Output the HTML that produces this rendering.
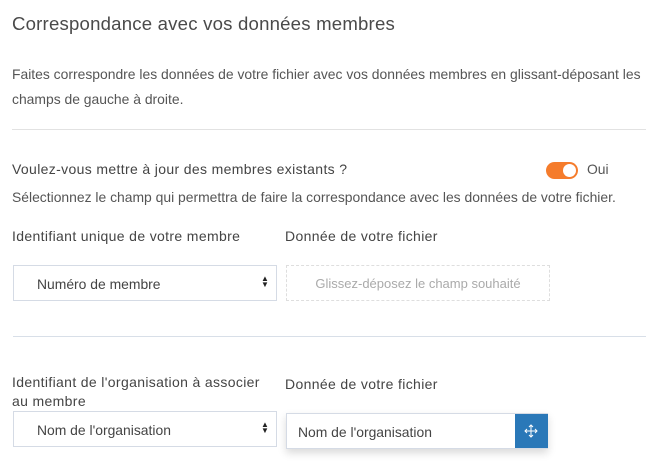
<!DOCTYPE html><html><head><style>
body{margin:0;width:661px;height:474px;background:#fff;font-family:"Liberation Sans",sans-serif;color:#555;position:relative;overflow:hidden}
.a{position:absolute;white-space:nowrap}
.t{font-size:13.9px;color:#555}
.l{font-size:14px;letter-spacing:.35px;color:#444}
</style></head><body>
<div class="a" style="left:12px;top:13px;font-size:18.6px;letter-spacing:.2px;color:#4a4a4a">Correspondance avec vos données membres</div>
<div class="a t" style="left:12px;top:66px">Faites correspondre les données de votre fichier avec vos données membres en glissant-déposant les</div>
<div class="a t" style="left:12px;top:91px">champs de gauche à droite.</div>
<div class="a" style="left:12px;top:129px;width:634px;height:1px;background:#e2e2e2"></div>
<div class="a l" style="left:12px;top:161px">Voulez-vous mettre à jour des membres existants ?</div>
<div class="a" style="left:546px;top:162px;width:32px;height:17px;border-radius:9px;background:#f57c2c"></div>
<div class="a" style="left:563px;top:164px;width:13px;height:13px;border-radius:7px;background:#fff"></div>
<div class="a t" style="left:587px;top:161px">Oui</div>
<div class="a t" style="left:12px;top:189px">Sélectionnez le champ qui permettra de faire la correspondance avec les données de votre fichier.</div>
<div class="a l" style="left:12px;top:228px">Identifiant unique de votre membre</div>
<div class="a l" style="left:285px;top:228px">Donnée de votre fichier</div>
<div class="a" style="left:13px;top:265px;width:262px;height:34px;border:1px solid #d5dbe5"></div>
<div class="a t" style="left:37px;top:276px;color:#444">Numéro de membre</div>
<div class="a" style="left:261px;top:276px;font-size:8px;line-height:6px;color:#222">▲<br>▼</div>
<div class="a" style="left:286px;top:265px;width:262px;height:34px;border:1px dashed #dedede"></div>
<div class="a" style="left:286px;top:276px;width:264px;text-align:center;font-size:13px;color:#aaa">Glissez-déposez le champ souhaité</div>
<div class="a" style="left:13px;top:336px;width:633px;height:1px;background:#d8dfe8"></div>
<div class="a l" style="left:12px;top:373px;line-height:19px">Identifiant de l'organisation à associer<br>au membre</div>
<div class="a l" style="left:285px;top:376px">Donnée de votre fichier</div>
<div class="a" style="left:13px;top:411px;width:262px;height:34px;border:1px solid #d5dbe5"></div>
<div class="a t" style="left:37px;top:422px;color:#444">Nom de l'organisation</div>
<div class="a" style="left:261px;top:422px;font-size:8px;line-height:6px;color:#222">▲<br>▼</div>
<div class="a" style="left:286px;top:413px;width:260px;height:34px;border:1px solid #d5dbe5;box-shadow:0 4px 8px rgba(0,0,0,.15);background:#fff"></div>
<div class="a t" style="left:298px;top:424px;color:#444">Nom de l'organisation</div>
<div class="a" style="left:515px;top:414px;width:33px;height:34px;background:#2a78b8"></div>
<svg class="a" style="left:524px;top:424px" width="14" height="14" viewBox="0 0 14 14" fill="none" stroke="#fff" stroke-width="1"><path d="M7 1v12M1 7h12M5 3l2-2 2 2M5 11l2 2 2-2M3 5L1 7l2 2M11 5l2 2-2 2"/></svg>
</body></html>
